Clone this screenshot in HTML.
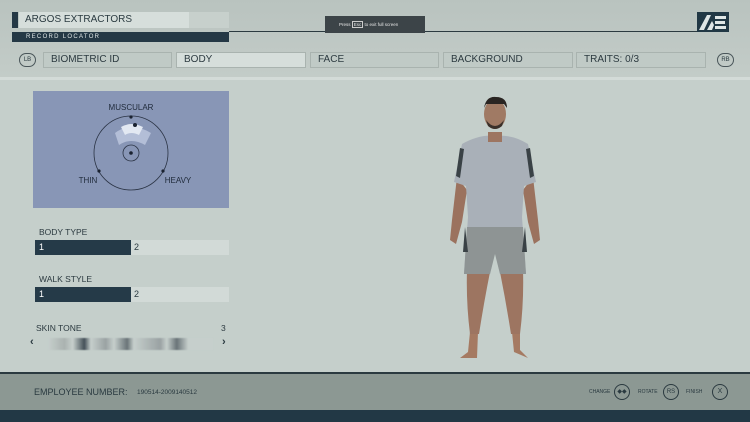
<!DOCTYPE html>
<html><head><style>
*{margin:0;padding:0;box-sizing:border-box}
body{width:750px;height:422px;overflow:hidden;position:relative;font-family:"Liberation Sans",sans-serif;background:#c5cfcb;color:#2a3a40}
.a{position:absolute}
.tab{position:absolute;top:52px;height:16px;border:1px solid #a9b3af;background:#c0cac6;font-size:10px;line-height:14px;padding-left:7px;color:#2c3a40}
.pill{position:absolute;top:53px;width:17px;height:14px;border:1px solid #4a565a;border-radius:7px;font-size:6px;line-height:12px;text-align:center}
.lbl{position:absolute;font-size:8.5px;color:#2c3a40}
.bar{position:absolute;left:35px;width:194px;height:15px;background:#d2dad7}
.bar .f{position:absolute;left:0;top:0;width:96px;height:15px;background:#253a48;color:#fff;font-size:9px;line-height:15px;padding-left:4px}
.bar .n{position:absolute;left:99px;top:0;font-size:9px;line-height:15px}
</style></head><body>
<div class="a" style="left:0;top:0;width:750px;height:77px;background:linear-gradient(#b9c3bf,#c3ccc8)"></div>
<div class="a" style="left:0;top:77px;width:750px;height:3px;background:#d3dbd8"></div>
<div class="a" style="left:12px;top:12px;width:6px;height:16px;background:#243845"></div>
<div class="a" style="left:19px;top:12px;width:170px;height:16px;background:#d6dedb;font-size:10px;line-height:16px;padding-left:6px">ARGOS EXTRACTORS</div>
<div class="a" style="left:189px;top:12px;width:40px;height:16px;background:#c7d0cc"></div>
<div class="a" style="left:12px;top:32px;width:217px;height:10px;background:#243845;color:#dfe6e6;font-size:6px;letter-spacing:1.3px;line-height:10px;padding-left:14px">RECORD LOCATOR</div>
<div class="a" style="left:229px;top:31px;width:500px;height:1px;background:#2b3a40"></div>
<div class="a" style="left:325px;top:16px;width:100px;height:17px;background:#3c4448;color:#e6e6e6;font-size:4.5px;line-height:17px;padding-left:14px">Press <span style="border:1px solid #ccc;padding:0 1px">Esc</span> to exit full screen</div>
<svg class="a" style="left:697px;top:12px" width="32" height="20" viewBox="0 0 32 20"><rect width="32" height="20" fill="#213845"/><path d="M2 18 L10 3 L14 3 L7 18Z M10 18 L15 9 L17 13 L15 18Z" fill="#dfe6e6"/><path d="M18 4h11v3h-11z M18 9h10v3h-10z M18 14h11v3h-11z" fill="#dfe6e6"/></svg>
<div class="pill" style="left:19px">LB</div>
<div class="pill" style="left:717px">RB</div>
<div class="tab" style="left:43px;width:129px">BIOMETRIC ID</div>
<div class="tab" style="left:176px;width:130px;background:#d6dedb">BODY</div>
<div class="tab" style="left:310px;width:129px">FACE</div>
<div class="tab" style="left:443px;width:130px">BACKGROUND</div>
<div class="tab" style="left:576px;width:130px">TRAITS: 0/3</div>
<svg class="a" style="left:33px;top:91px" width="196" height="117"><rect width="196" height="117" fill="#8896b6"/>
<text x="98" y="19" font-size="8" text-anchor="middle" fill="#1f2a3a" font-family="Liberation Sans">MUSCULAR</text>
<text x="55" y="92" font-size="8" text-anchor="middle" fill="#1f2a3a" font-family="Liberation Sans">THIN</text>
<text x="145" y="92" font-size="8" text-anchor="middle" fill="#1f2a3a" font-family="Liberation Sans">HEAVY</text>
<path d="M82 42 Q98 30 118 42 L112 54 Q98 46 86 54Z" fill="#b8c2da" opacity=".9"/>
<path d="M88 36 Q98 30 110 36 L106 44 Q98 40 92 44Z" fill="#e2e8f2"/>
<circle cx="98" cy="62" r="37" fill="none" stroke="#2a3344" stroke-width=".8"/>
<circle cx="98" cy="62" r="8" fill="none" stroke="#2a3344" stroke-width=".8"/>
<circle cx="98" cy="62" r="1.8" fill="#1a2230"/><circle cx="98" cy="26" r="1.6" fill="#1a2230"/><circle cx="102" cy="34" r="2" fill="#1a2230"/><circle cx="66" cy="80" r="1.6" fill="#1a2230"/><circle cx="130" cy="80" r="1.6" fill="#1a2230"/></svg>
<div class="lbl" style="left:39px;top:227px">BODY TYPE</div>
<div class="bar" style="top:240px"><div class="f">1</div><div class="n">2</div></div>
<div class="lbl" style="left:39px;top:274px">WALK STYLE</div>
<div class="bar" style="top:287px"><div class="f">1</div><div class="n">2</div></div>
<div class="lbl" style="left:36px;top:323px">SKIN TONE</div>
<div class="lbl" style="left:221px;top:323px">3</div>
<div class="a" style="left:30px;top:336px;font-size:11px;font-weight:bold">‹</div>
<div class="a" style="left:222px;top:336px;font-size:11px;font-weight:bold">›</div>
<div class="a" style="left:48px;top:338px;width:165px;height:12px;background:linear-gradient(90deg,#c6cfcc,#aab2b0 10%,#c6cfcc 15%,#445058 22%,#c6cfcc 26%,#9aa2a3 35%,#c6cfcc 40%,#6a7478 48%,#c6cfcc 52%,#9aa2a3 68%,#c6cfcc 72%,#6a7478 78%,#c6cfcc 85%,#c6cfcc);filter:blur(.6px)"></div>
<svg class="a" style="left:440px;top:92px" width="110" height="268" viewBox="0 0 110 268">
<path d="M30 240 L28 260 L20 266 L37 266 L38 240Z M72 240 L74 260 L88 266 L80 258 L80 240Z" fill="#a57a62"/>
<path d="M27 178 Q26 210 30 242 L39 242 Q44 210 50 180Z M60 180 Q66 210 71 242 L80 242 Q84 210 83 178Z" fill="#9d7561"/>
<path d="M17 85 L12 128 L10 148 L16 152 L22 130 L27 98Z M93 85 L98 128 L100 148 L94 152 L88 130 L83 98Z" fill="#9b725e"/>
<path d="M22 52 Q40 42 55 44 Q72 42 88 52 L96 90 L84 94 L82 125 L86 182 L60 182 L55 160 L50 182 L24 182 L28 125 L26 94 L14 90Z" fill="#a9b0b8"/>
<path d="M27 135 L83 135 L86 182 L60 182 L55 162 L50 182 L24 182Z" fill="#8e9494"/>
<path d="M20 56 L16 84 L20 86 L24 57Z M90 56 L94 84 L90 86 L86 57Z M25 135 L23 160 L28 160Z M85 135 L87 160 L82 160Z" fill="#3a4246"/>
<path d="M48 40 L62 40 L62 50 L48 50Z" fill="#9d7561"/>
<ellipse cx="55" cy="22" rx="11" ry="15" fill="#a07a64"/>
<path d="M44 16 Q46 4 56 5 Q67 5 67 16 L64 12 L46 12Z" fill="#2a2522"/>
<path d="M46 28 Q55 40 64 28 L62 34 Q55 40 48 34Z" fill="#3a302a"/>
</svg>
<div class="a" style="left:0;top:372px;width:750px;height:2px;background:#2b3a40"></div>
<div class="a" style="left:0;top:374px;width:750px;height:36px;background:#8c9893"></div>
<div class="a" style="left:0;top:410px;width:750px;height:12px;background:#223845"></div>
<div class="a" style="left:34px;top:387px;font-size:9px">EMPLOYEE NUMBER:</div>
<div class="a" style="left:137px;top:389px;font-size:6.5px">190514-2009140512</div>
<div class="a" style="left:589px;top:389px;font-size:5px">CHANGE</div>
<div class="a" style="left:614px;top:384px;width:16px;height:16px;border:1px solid #2b3a40;border-radius:50%;font-size:6px;line-height:14px;text-align:center">◆◆</div>
<div class="a" style="left:638px;top:389px;font-size:5px">ROTATE</div>
<div class="a" style="left:663px;top:384px;width:16px;height:16px;border:1px solid #2b3a40;border-radius:50%;font-size:6px;line-height:14px;text-align:center">RS</div>
<div class="a" style="left:686px;top:389px;font-size:5px">FINISH</div>
<div class="a" style="left:712px;top:384px;width:16px;height:16px;border:1px solid #2b3a40;border-radius:50%;font-size:7px;line-height:14px;text-align:center">X</div>
</body></html>
